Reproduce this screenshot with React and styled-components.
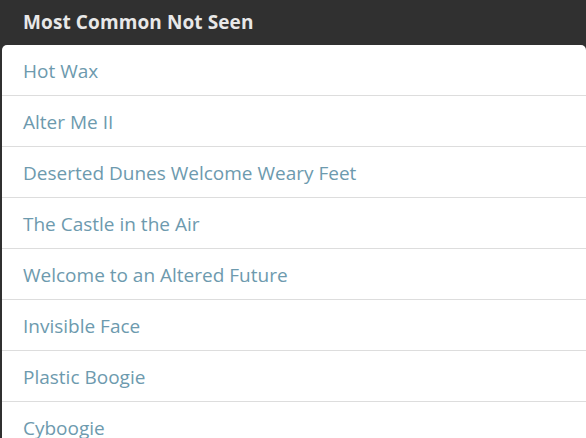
import React from "react";
import styled, { createGlobalStyle } from "styled-components";

const Global = createGlobalStyle`
  html, body { margin: 0; padding: 0; background: #303030; }
  body { font-family: "Open Sans", "Noto Sans", sans-serif; overflow: hidden; }
`;

const Page = styled.div`
  width: 586px;
  height: 438px;
  background: #303030;
  overflow: hidden;
`;

const Title = styled.h2`
  margin: 0;
  height: 44px;
  padding: 0 0 1px 23px;
  display: flex;
  align-items: center;
  color: #e8e8e8;
  font-size: 19px;
  font-weight: 700;
  letter-spacing: 0.1px;
`;

const List = styled.ul`
  list-style: none;
  margin: 0 0 0 2px;
  padding: 0;
  background: #fff;
  border-radius: 5px 5px 0 0;
  width: 584px;
`;

const Item = styled.li`
  height: 50px;
  box-sizing: border-box;
  padding: 1px 0 0 21px;
  display: flex;
  align-items: center;
  color: #6d9aae;
  font-size: 19px;
  border-bottom: 1px solid #dddddd;
  height: 51px;
`;

const items = [
  "Hot Wax",
  "Alter Me II",
  "Deserted Dunes Welcome Weary Feet",
  "The Castle in the Air",
  "Welcome to an Altered Future",
  "Invisible Face",
  "Plastic Boogie",
  "Cyboogie",
];

export default function App() {
  return (
    <Page>
      <Global />
      <Title>Most Common Not Seen</Title>
      <List>
        {items.map((t, i) => (
          <Item key={i}>{t}</Item>
        ))}
      </List>
    </Page>
  );
}
